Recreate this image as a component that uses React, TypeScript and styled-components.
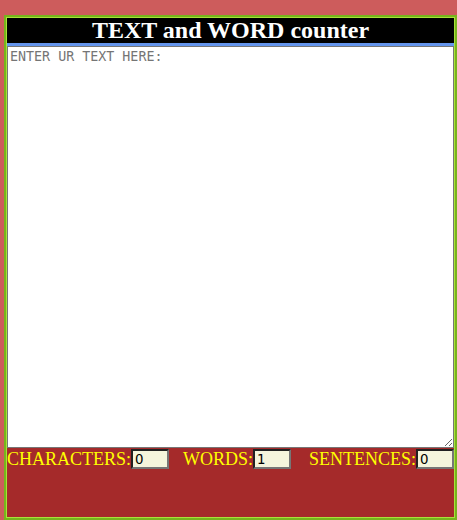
import React, { useState } from "react";
import styled, { createGlobalStyle } from "styled-components";

const Global = createGlobalStyle`
  html, body {
    margin: 0;
    padding: 0;
    background: #cd5c5c;
  }
`;

const Frame = styled.div`
  box-sizing: border-box;
  margin: 15px 0 0 4px;
  width: 453px;
  height: 505px;
  border: 2px solid #77b41c;
  box-shadow: inset 0 0 0 1px #a8e23a;
  padding: 1px;
  background: #a52a2a;
  display: flex;
  flex-direction: column;
`;

const Title = styled.h1`
  margin: 0;
  background: #000;
  color: #fff;
  font-family: "Liberation Serif", "Times New Roman", serif;
  font-weight: bold;
  font-size: 24px;
  line-height: 25px;
  text-align: center;
  border-bottom: 3px solid #6495ed;
`;

const Area = styled.textarea`
  display: block;
  box-sizing: border-box;
  width: 100%;
  height: 402px;
  margin: 0;
  padding: 2px;
  border: 1px solid #767676;
  background: #fff;
  font-family: "DejaVu Sans Mono", monospace;
  font-size: 13.33px;
  outline: none;
  &::placeholder {
    color: #757575;
  }
`;

const Counters = styled.div`
  display: flex;
  align-items: center;
  height: 22px;
`;

const Label = styled.span<{ $gap: number }>`
  margin-left: ${(p) => p.$gap}px;
  color: #ffff00;
  font-family: "Liberation Serif", "Times New Roman", serif;
  font-size: 18px;
  line-height: 22px;
`;

const Count = styled.input`
  box-sizing: border-box;
  width: 38px;
  height: 20px;
  margin: 0;
  padding: 1px 2px;
  border: 2px inset #767676;
  background: #f5f5dc;
  color: #000;
  font-family: "DejaVu Sans", sans-serif;
  font-size: 13.33px;
`;

export default function App() {
  const [text, setText] = useState("");
  const chars = text.length;
  const words = text.split(/\s+/).length;
  const sentences = (text.match(/[.!?]+/g) || []).length;
  return (
    <>
      <Global />
      <Frame>
        <Title>TEXT and WORD counter</Title>
        <Area
          placeholder="ENTER UR TEXT HERE:"
          value={text}
          onChange={(e) => setText(e.target.value)}
        />
        <Counters>
          <Label $gap={0}>CHARACTERS:</Label>
          <Count readOnly value={chars} />
          <Label $gap={14}>WORDS:</Label>
          <Count readOnly value={words} />
          <Label $gap={18}>SENTENCES:</Label>
          <Count readOnly value={sentences} />
        </Counters>
      </Frame>
    </>
  );
}
